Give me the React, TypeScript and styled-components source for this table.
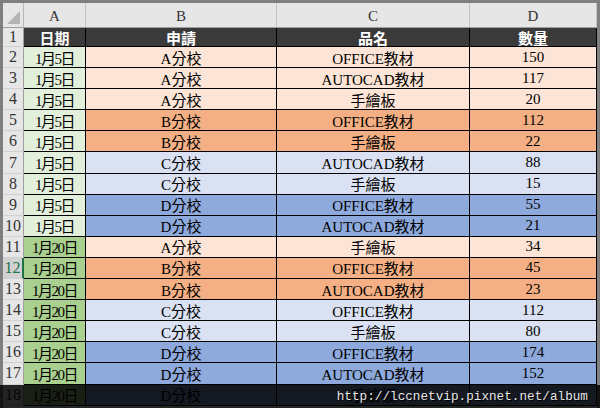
import React from "react";
import styled, { createGlobalStyle } from "styled-components";

// 資料列：日期、申請、品名、數量
interface RowData {
  date: string;
  school: string;
  item: string;
  qty: string;
}

const rows: RowData[] = [
  { date: "1月5日", school: "A分校", item: "OFFICE教材", qty: "150" },
  { date: "1月5日", school: "A分校", item: "AUTOCAD教材", qty: "117" },
  { date: "1月5日", school: "A分校", item: "手繪板", qty: "20" },
  { date: "1月5日", school: "B分校", item: "OFFICE教材", qty: "112" },
  { date: "1月5日", school: "B分校", item: "手繪板", qty: "22" },
  { date: "1月5日", school: "C分校", item: "AUTOCAD教材", qty: "88" },
  { date: "1月5日", school: "C分校", item: "手繪板", qty: "15" },
  { date: "1月5日", school: "D分校", item: "OFFICE教材", qty: "55" },
  { date: "1月5日", school: "D分校", item: "AUTOCAD教材", qty: "21" },
  { date: "1月20日", school: "A分校", item: "手繪板", qty: "34" },
  { date: "1月20日", school: "B分校", item: "OFFICE教材", qty: "45" },
  { date: "1月20日", school: "B分校", item: "AUTOCAD教材", qty: "23" },
  { date: "1月20日", school: "C分校", item: "OFFICE教材", qty: "112" },
  { date: "1月20日", school: "C分校", item: "手繪板", qty: "80" },
  { date: "1月20日", school: "D分校", item: "OFFICE教材", qty: "174" },
  { date: "1月20日", school: "D分校", item: "AUTOCAD教材", qty: "152" },
  { date: "1月20日", school: "D分校", item: "手繪板", qty: "" },
];

const schoolColor: Record<string, string> = {
  A: "#fce4d6",
  B: "#f4b084",
  C: "#d9e1f2",
  D: "#8ea9db",
};

const GlobalStyle = createGlobalStyle`
  html, body {
    margin: 0;
    padding: 0;
    background: #fff;
  }
  #root {
    width: 600px;
    height: 408px;
    overflow: hidden;
  }
`;

const Frame = styled.div`
  position: relative;
  box-sizing: border-box;
  width: 600px;
  height: 408px;
  overflow: hidden;
  padding: 3px 3px 0 3px;
  background: #7f7f7f;
`;

const Sheet = styled.div`
  display: grid;
  grid-template-columns: 21px 62px 191px 193px 127px;
  grid-template-rows: 25px 19px repeat(18, 21.1px);
  background: #fff;
  font-family: "Liberation Serif", "Noto Sans CJK TC", serif;
  font-size: 15px;
  color: #000;
`;

const Corner = styled.div`
  box-sizing: border-box;
  position: relative;
  background: #e6e6e6;
  border-right: 1px solid #b8b8b8;
  border-bottom: 1px solid #9e9e9e;
  display: flex;
  align-items: flex-end;
  justify-content: flex-end;
  padding: 0 3px 3px 0;
`;

const ColHead = styled.div`
  box-sizing: border-box;
  background: #e6e6e6;
  border-right: 1px solid #c4c4c4;
  border-bottom: 1px solid #9e9e9e;
  display: flex;
  align-items: center;
  justify-content: center;
  padding-top: 3px;
  color: #333;
`;

const RowHead = styled.div<{ $active?: boolean }>`
  box-sizing: border-box;
  background: ${(p) => (p.$active ? "#d2d2d2" : "#e6e6e6")};
  border-right: ${(p) => (p.$active ? "2px solid #217346" : "1px solid #9e9e9e")};
  border-bottom: 1px solid #d0d0d0;
  display: flex;
  align-items: center;
  justify-content: center;
  color: ${(p) => (p.$active ? "#217346" : "#333")};
  font-size: 16px;
`;

const TitleCell = styled.div`
  box-sizing: border-box;
  background: #3a3a3a;
  border-right: 1px solid #000;
  border-bottom: 1px solid #000;
  display: flex;
  align-items: center;
  justify-content: center;
  color: #fff;
  font-weight: bold;
`;

const Cell = styled.div<{ $bg: string; $tight?: boolean }>`
  box-sizing: border-box;
  background: ${(p) => p.$bg};
  border-right: 1px solid #000;
  border-bottom: 1px solid #000;
  display: flex;
  align-items: center;
  justify-content: center;
  white-space: nowrap;
  letter-spacing: ${(p) => (p.$tight ? "-1.5px" : "0")};
`;

const Watermark = styled.div`
  position: absolute;
  left: 0;
  right: 0;
  bottom: 0;
  height: 23px;
  background: rgba(0, 0, 0, 0.85);
  display: flex;
  align-items: center;
  justify-content: flex-end;
  padding-right: 12px;
  font-family: "Liberation Mono", monospace;
  font-size: 12.7px;
  color: #e6e6e6;
  text-shadow: 1px 1px 0 #000;
`;

const CornerMark = () => (
  <svg width="13" height="13" viewBox="0 0 13 13">
    <polygon points="13,0 13,13 0,13" fill="#b5b5b5" />
  </svg>
);

const App: React.FC = () => {
  return (
    <>
      <GlobalStyle />
      <Frame>
        <Sheet>
          <Corner>
            <CornerMark />
          </Corner>
          {["A", "B", "C", "D"].map((c) => (
            <ColHead key={c}>{c}</ColHead>
          ))}

          <RowHead>1</RowHead>
          <TitleCell>日期</TitleCell>
          <TitleCell>申請</TitleCell>
          <TitleCell>品名</TitleCell>
          <TitleCell>數量</TitleCell>

          {rows.map((r, i) => {
            const n = i + 2;
            const bg = schoolColor[r.school[0]];
            const dateBg = r.date === "1月5日" ? "#e2efda" : "#a9d08e";
            return (
              <React.Fragment key={n}>
                <RowHead $active={n === 12}>{n}</RowHead>
                <Cell $bg={dateBg} $tight>
                  {r.date}
                </Cell>
                <Cell $bg={bg}>{r.school}</Cell>
                <Cell $bg={bg}>{r.item}</Cell>
                <Cell $bg={bg}>{r.qty}</Cell>
              </React.Fragment>
            );
          })}
        </Sheet>
        <Watermark>http://lccnetvip.pixnet.net/album</Watermark>
      </Frame>
    </>
  );
};

export default App;
